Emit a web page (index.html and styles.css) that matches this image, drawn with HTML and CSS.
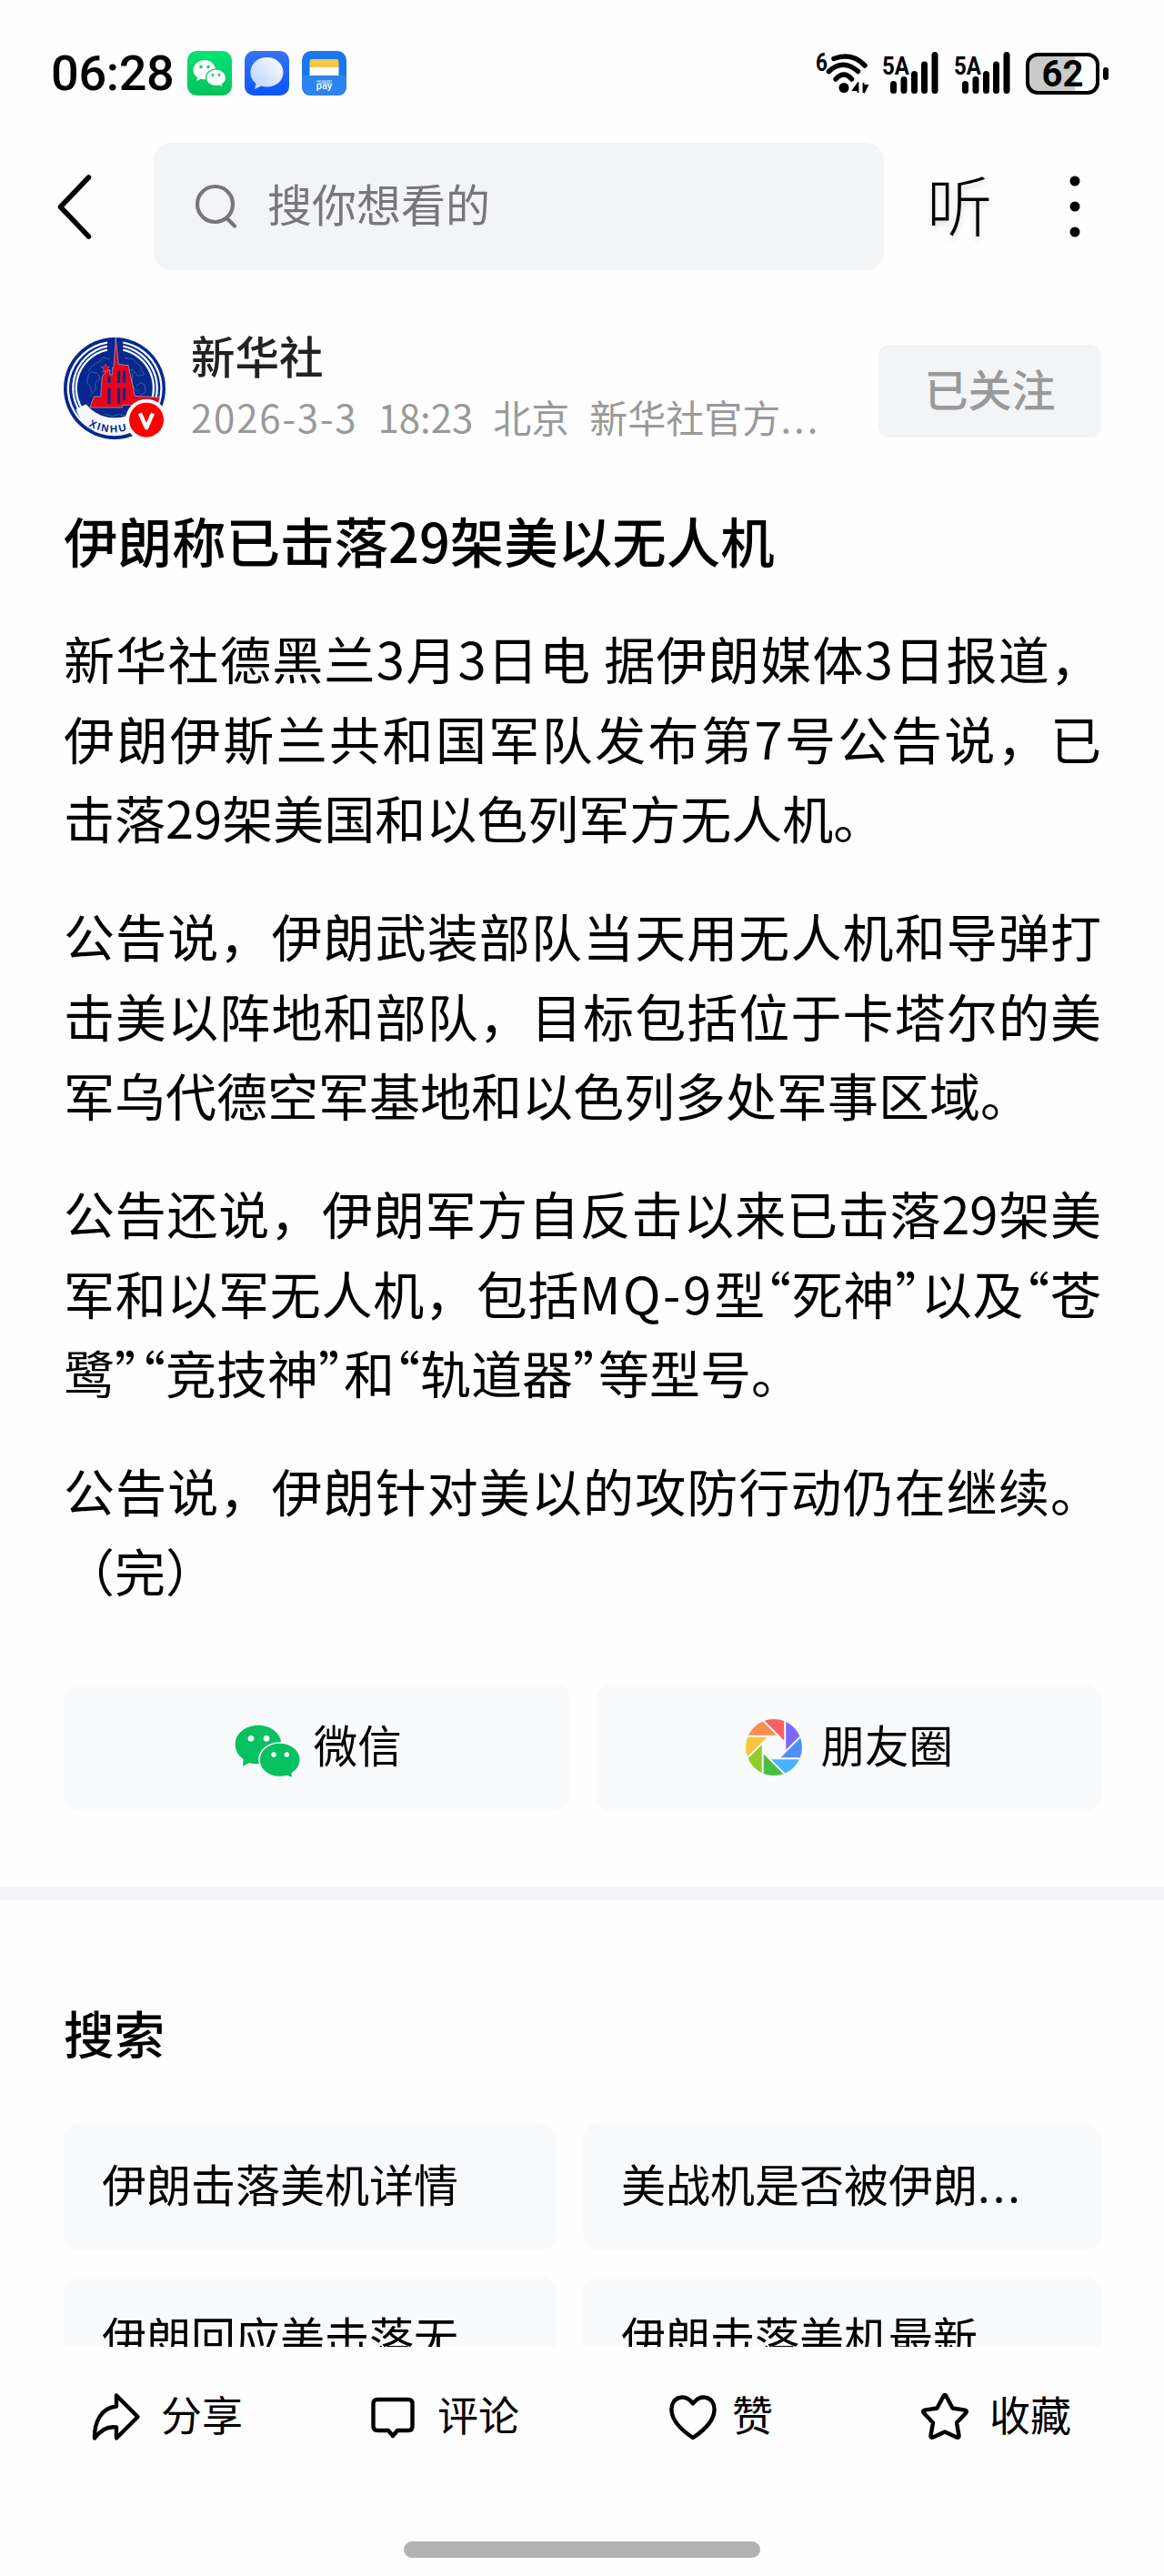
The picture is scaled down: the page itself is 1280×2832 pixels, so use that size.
FILE: index.html
```html
<!DOCTYPE html>
<html lang="zh-CN">
<head>
    <meta charset="UTF-8">
    <meta name="viewport" content="width=device-width, initial-scale=1.0">
    <title>伊朗称已击落29架美以无人机</title>
    <link rel="stylesheet" href="styles.css">
</head>
<body>
    <div class="scroll-area">
        <!-- Status bar -->
        <div class="status-bar">
            <div class="time">06:28</div>
            <div class="app-icons">
                <svg width="49" height="49" viewBox="0 0 49 49">
                    <defs>
                        <linearGradient id="green" x1="0" y1="0" x2="0" y2="1"><stop offset="0" stop-color="#04e474"/><stop offset="1" stop-color="#06c15c"/></linearGradient>
                    </defs>
                    <rect width="49" height="49" rx="10" fill="url(#green)"/>
                    <path d="M19 10c-7 0-12.500 5-12.500 11 0 3.500 1.800 6.500 4.800 8.500l-1 3.500 4.500-2.200c1.500.4 3 .5 4.500.5C26.500 31 31 26.500 31 21S26 10 19 10z" fill="#fff"/>
                    <path d="M31.500 20c-6 0-11 4.200-11 9.500s5 9.200 11 9.200c1.300 0 2.600-.2 3.700-.5l4 2-1-3.400c2.700-1.800 4.300-4.300 4.300-7.300 0-5.300-5-9.500-11-9.500z" fill="#fff" stroke="#06cf65" stroke-width="1.200"/>
                    <g fill="#06cf65"><circle cx="15" cy="17.500" r="1.800"/><circle cx="23" cy="17.500" r="1.800"/><circle cx="28" cy="26.500" r="1.500"/><circle cx="35" cy="26.500" r="1.500"/></g>
                </svg>
                <svg width="49" height="49" viewBox="0 0 49 49">
                    <defs>
                        <linearGradient id="blue" x1="0" y1="0" x2="0" y2="1"><stop offset="0" stop-color="#3674f4"/><stop offset="1" stop-color="#0a55fb"/></linearGradient>
                        <linearGradient id="bubble" x1="1" y1="0" x2="0" y2="1"><stop offset="0" stop-color="#fff"/><stop offset="1" stop-color="#b9cffb"/></linearGradient>
                    </defs>
                    <rect width="49" height="49" rx="10" fill="url(#blue)"/>
                    <path d="M24.500 7C14 7 6.500 14.500 6.500 23.500c0 5.500 2.500 9.500 6 12.300L11 42l7.500-3.500c2 .7 4 1 6 1 10.500 0 18-7 18-16S35 7 24.500 7z" fill="url(#bubble)"/>
                </svg>
                <svg width="49" height="49" viewBox="0 0 49 49">
                    <rect width="49" height="49" rx="10" fill="#1976ed"/>
                    <path d="M8.500 18v-6q0-3 3-3h26q3 0 3 3v6z" fill="#f5c748"/>
                    <path d="M8.500 18h32v9h-32z" fill="#fff"/>
                    <path d="M0 27h49v12q0 10-10 10H10Q0 49 0 39z" fill="#2d83ee"/>
                    <text x="24.500" y="36" class="pay-small">HUAWEI</text>
                    <text x="24.500" y="42" class="pay-text">pay</text>
                </svg>
            </div>
            <div class="signals">
                <svg class="wifi" width="60" height="50" viewBox="0 0 60 50">
                    <text x="0" y="22" class="net-text" textLength="13" lengthAdjust="spacingAndGlyphs">6</text>
                    <g fill="none" stroke="#000" stroke-width="5.500" stroke-linecap="round">
                        <path d="M20 8.500Q40 1 54 16"/>
                        <path d="M14.500 22.500Q30 8 46.500 22.500"/>
                        <path d="M22 31Q31 21 39.500 31"/>
                    </g>
                    <circle cx="31" cy="40.500" r="5.500"/>
                    <path d="M46.500 35v11M46 36l-5 7h5z M52.500 46V35M53 46l4-8h-4z" stroke="#000" stroke-width="1.800"/>
                </svg>
                <svg class="cell" width="63" height="50" viewBox="0 0 63 50">
                    <text x="0" y="25.500" class="net-text" textLength="30" lengthAdjust="spacingAndGlyphs">5A</text>
                    <path d="M12.500 36.500v7M24 31.500v12M35.500 25.500v18M46.500 15v28.500M58 4.500v39" stroke="#000" stroke-width="7" stroke-linecap="round"/>
                </svg>
                <svg class="cell" width="63" height="50" viewBox="0 0 63 50">
                    <text x="0" y="25.500" class="net-text" textLength="30" lengthAdjust="spacingAndGlyphs">5A</text>
                    <path d="M12.500 36.500v7M24 31.500v12M35.500 25.500v18M46.500 15v28.500M58 4.500v39" stroke="#000" stroke-width="7" stroke-linecap="round"/>
                </svg>
                <div class="battery">62</div>
                <div class="battery-cap"></div>
            </div>
        </div>

        <!-- Search header -->
        <div class="header">
            <svg class="back" width="40" height="74" viewBox="0 0 40 74">
                <path d="M36.500 5L5.500 37.500 36.500 70" fill="none" stroke="#000" stroke-width="5.500" stroke-linecap="round" stroke-linejoin="round"/>
            </svg>
            <div class="search-box">
                <svg width="46" height="50" viewBox="0 0 46 50">
                    <g fill="none" stroke="#777779" stroke-width="4.200" stroke-linecap="round"><circle cx="21.500" cy="22.500" r="19.500"/><path d="M35 38.500l8 8"/></g>
                </svg>
                <span>搜你想看的</span>
            </div>
            <div class="listen">听</div>
            <svg class="more" width="12" height="70" viewBox="0 0 12 70">
                <circle cx="6" cy="7" r="5.500"/><circle cx="6" cy="35" r="5.500"/><circle cx="6" cy="63" r="5.500"/>
            </svg>
        </div>

        <!-- Author -->
        <div class="author">
            <svg class="avatar" width="112" height="112" viewBox="30 33 336 336">
                <circle cx="198" cy="201" r="168" fill="#06278c"/>
                <path d="M70 270q30 85 128 88 90-3 128-88l-40-20H110z" fill="#f4f7ff"/>
                <g fill="none" stroke="#f4f7ff" stroke-width="7">
                    <path d="M174 50A153 153 0 0 0 112 328M226 50A153 153 0 0 1 322 292"/>
                    <path d="M174 62A141 141 0 0 0 116 312M226 62A141 141 0 0 1 316 276"/>
                    <path d="M174 74A129 129 0 0 0 116 298M226 74A129 129 0 0 1 306 270"/>
                </g>
                <ellipse cx="198" cy="192" rx="115" ry="106" fill="#06278c"/>
                <g fill="none" stroke="#5a78bd" stroke-width="2">
                    <path d="M112 144q12-24 35-30l12-15 24 5M120 146l22 5 8 18-16 16 2 20-12 12-8-24-9-12 5-26zM232 100l25 4 25 22 14 30-22 4-14-18-26-6M270 192l14-10 14 8 2 24-18 8M258 150q-8 40 12 60M165 285l25 8 20-6 30 5"/>
                </g>
                <path d="M202 34l9 88h14v2h18l22 102 82 4-6 26H224v8h-36v-0h-72l14-36h22l5-66 10-14-2-8h18v16h8v-24h4z" fill="#e4041b" stroke="#a8b5dc" stroke-width="2"/>
                <path d="M168 120l4 9 10 1-8 7 3 11-9-6-10 6 4-11-9-7 11-1z" fill="#e4041b" stroke="#a8b5dc"/>
                <path d="M180 161v22M180 200v52M212 143v40M212 200v52M230 143v40M230 200v40" stroke="#06278c" stroke-width="9"/>
                <defs><path id="ring" d="M112 324Q190 368 280 324"/></defs>
                <text class="logo-text"><textPath href="#ring">XINHUA</textPath></text>
                <circle cx="303" cy="305" r="69" fill="#fff"/>
                <circle cx="303" cy="305" r="57" fill="#f00"/>
                <path d="M282 283l21 48 21-48" fill="none" stroke="#fff" stroke-width="13" stroke-linejoin="round"/>
            </svg>
            <div class="author-info">
                <div class="author-name">新华社</div>
                <div class="author-meta"><span class="date">2026-3-3</span><span>18:23</span><span>北京</span><span>新华社官方<span class="dots">...</span></span></div>
            </div>
            <div class="follow">已关注</div>
        </div>

        <!-- Article -->
        <h1 class="title">伊朗称已击落29架美以无人机</h1>
        <div class="article">
            <p>
                <span class="line full">新华社德黑兰3月3日电 据伊朗媒体3日报道，</span>
                <span class="line full">伊朗伊斯兰共和国军队发布第7号公告说，已</span>
                <span class="line">击落29架美国和以色列军方无人机。</span>
            </p>
            <p>
                <span class="line full">公告说，伊朗武装部队当天用无人机和导弹打</span>
                <span class="line full">击美以阵地和部队，目标包括位于卡塔尔的美</span>
                <span class="line">军乌代德空军基地和以色列多处军事区域。</span>
            </p>
            <p>
                <span class="line full">公告还说，伊朗军方自反击以来已击落29架美</span>
                <span class="line full">军和以军无人机，包括<span class="latin">MQ-9</span>型<span class="quote">“</span>死神<span class="quote">”</span>以及<span class="quote">“</span>苍</span>
                <span class="line">鹭<span class="quote">”“</span>竞技神<span class="quote">”</span>和<span class="quote">“</span>轨道器<span class="quote">”</span>等型号。</span>
            </p>
            <p>
                <span class="line full">公告说，伊朗针对美以的攻防行动仍在继续。</span>
                <span class="line">（完）</span>
            </p>
        </div>

        <!-- Share buttons -->
        <div class="share-row">
            <div class="share-btn">
                <svg class="wechat" width="72" height="60" viewBox="24 45 216 180">
                    <path d="M102 47C59 47 26 75 26 110c0 20 10 38 27 48l-2 24 22-11c9 3 18 4 29 4 42 0 76-29 76-65s-34-63-76-63z" fill="#07c160"/>
                    <path d="M173 105c-38 0-68 25-68 56s30 57 68 57c8 0 16-1 24-3l19 7-2-17c16-10 27-26 27-44 0-31-30-56-68-56z" fill="#07c160" stroke="#f9fafc" stroke-width="5"/>
                    <g fill="#fff"><circle cx="78" cy="91" r="10"/><circle cx="129" cy="91" r="10"/><circle cx="153" cy="144" r="8"/><circle cx="196" cy="144" r="8"/></g>
                </svg>
                <span>微信</span>
            </div>
            <div class="share-btn">
                <svg class="moments" width="62" height="62" viewBox="-31 -31 62 62">
                    <defs>
                        <clipPath id="disc"><circle r="31"/></clipPath>
                        <path id="blade" d="M-13.900-31.400L12.400-5.100V-36z"/>
                    </defs>
                    <g clip-path="url(#disc)" stroke="#f9fafc" stroke-width="1.800">
                        <use href="#blade" fill="#fa5f5f"/>
                        <use href="#blade" fill="#7a68fb" transform="rotate(45)"/>
                        <use href="#blade" fill="#508ffa" transform="rotate(90)"/>
                        <use href="#blade" fill="#48b3fd" transform="rotate(135)"/>
                        <use href="#blade" fill="#49be43" transform="rotate(180)"/>
                        <use href="#blade" fill="#8dce2b" transform="rotate(225)"/>
                        <use href="#blade" fill="#fec63d" transform="rotate(270)"/>
                        <use href="#blade" fill="#fc8e50" transform="rotate(315)"/>
                    </g>
                </svg>
                <span>朋友圈</span>
            </div>
        </div>

        <div class="divider"></div>

        <!-- Related searches -->
        <h2 class="section-title">搜索</h2>
        <div class="related">
            <div class="related-item">伊朗击落美机详情</div>
            <div class="related-item">美战机是否被伊朗<span class="dots">...</span></div>
            <div class="related-item">伊朗回应美击落无</div>
            <div class="related-item">伊朗击落美机最新</div>
        </div>
    </div>

    <!-- Bottom toolbar -->
    <div class="toolbar">
        <div class="actions">
            <div class="action share">
                <svg width="53" height="54" viewBox="0 0 53 54">
                    <path d="M27 3.500L50.500 27 27 50.500V38.500C17 37 10 41 3 50.500 2.500 32 11 17 27 15.500z"/>
                </svg>
                <span>分享</span>
            </div>
            <div class="action comment">
                <svg width="50" height="54" viewBox="0 0 50 54">
                    <path d="M8 8h34q4.500 0 4.500 4.500v25q0 4.500-4.500 4.500H30l-5 6-5-6H8q-4.500 0-4.500-4.500v-25Q3.500 8 8 8z"/>
                </svg>
                <span>评论</span>
            </div>
            <div class="action like">
                <svg width="52" height="54" viewBox="0 0 52 54">
                    <path d="M26 12.500C30 7 35 5 39.500 5.700 46 6.500 50 12 49.500 20 49 31 38 42 26 50 14 42 3 31 2.500 20 2 12 6 6.500 12.500 5.700 17 5 22 7 26 12.500z"/>
                </svg>
                <span>赞</span>
            </div>
            <div class="action favorite">
                <svg width="52" height="54" viewBox="0 0 52 54">
                    <path d="M24.500 4.200q1.500-2.400 3 0l7 13.300 13.500 2.200q3 .8 1.200 3L39 33.500l2.500 14q.2 3-2.600 2L26 43.500l-12.900 6q-2.800 1-2.600-2l2.500-14L2.800 22.700q-1.800-2.200 1.200-3l13.500-2.200z"/>
                </svg>
                <span>收藏</span>
            </div>
        </div>
        <div class="home-indicator"></div>
    </div>
</body>
</html>
```
FILE: styles.css
```css
* {
    margin: 0;
    padding: 0;
    box-sizing: border-box;
}
body {
    width: 1280px;
    height: 2832px;
    display: flex;
    flex-direction: column;
    overflow: hidden;
    background: #fefefe;
    color: #000;
    font-family: "Noto Sans CJK SC", sans-serif;
}
svg {
    display: block;
    flex-shrink: 0;
    overflow: visible;
}
.scroll-area {
    height: 2580px;
    flex-shrink: 0;
    overflow: hidden;
}
/* Status bar */
.status-bar {
    height: 157px;
    padding: 4px 61px 0 56px;
    display: flex;
    align-items: center;
}
.time {
    width: 150px;
    font: 500 54px/60px Roboto, sans-serif;
    letter-spacing: -0.3px;
}
.app-icons {
    display: flex;
    gap: 14px;
}
.pay-small, .pay-text {
    fill: #fff;
    font-family: Roboto, sans-serif;
    text-anchor: middle;
}
.pay-small {
    font-size: 4.5px;
}
.pay-text {
    font-size: 11px;
    font-weight: 500;
}
.signals {
    margin-left: auto;
    display: flex;
    align-items: center;
}
.net-text {
    font: 700 28px Roboto, sans-serif;
}
.wifi {
    margin-right: 13px;
}
.cell {
    margin-right: 16px;
}
.battery {
    width: 81px;
    height: 46px;
    border: 4px solid #000;
    border-radius: 13px;
    background: linear-gradient(to right, #cacaca 69%, #fff 69%);
    font: 700 40px/39px Roboto, sans-serif;
    text-align: center;
}
.battery-cap {
    width: 6px;
    height: 14px;
    margin-left: 4px;
    border-radius: 3px;
    background: #000;
}
/* Search header */
.header {
    height: 140px;
    padding: 0 92px 0 61px;
    display: flex;
    align-items: center;
}
.search-box {
    width: 803px;
    height: 140px;
    margin-left: 68px;
    padding-left: 46px;
    display: flex;
    align-items: center;
    border-radius: 20px;
    background: #f3f4f6;
    color: #777779;
    font-size: 49px;
    line-height: 60px;
}
.search-box span {
    margin: -8px 0 0 33px;
}
.listen {
    margin: -9px 0 0 47px;
    font-size: 72px;
    line-height: 80px;
    font-weight: 300;
    text-shadow: 0 4px 6px rgba(0, 0, 0, 0.15);
}
.more {
    margin-left: auto;
    margin-top: -1px;
}
/* Author */
.author {
    height: 112px;
    margin: 74px 69px 0 70px;
    display: flex;
}
.logo-text {
    fill: #06278c;
    font: 700 34px "Liberation Sans", sans-serif;
    letter-spacing: 6px;
}
.author-info {
    margin: -5px 0 0 28px;
}
.author-name {
    color: #222;
    font-size: 48.5px;
    line-height: 48px;
    font-weight: 500;
}
.author-meta {
    margin-top: 20px;
    display: flex;
    gap: 22px;
    color: #999;
    font-size: 42px;
    line-height: 48px;
    white-space: nowrap;
}
.date {
    letter-spacing: 1.8px;
}
.dots {
    letter-spacing: 3px;
}
.follow {
    width: 245px;
    height: 102px;
    margin: 8px 0 0 auto;
    border-radius: 12px;
    background: #f3f4f6;
    color: #999;
    font-size: 48px;
    line-height: 95px;
    font-weight: 500;
    text-align: center;
}
/* Article */
.title {
    margin: 70px 70px 0;
    font-size: 59.5px;
    line-height: 80px;
    font-weight: 500;
}
.article {
    margin: 46px 69px 0 70px;
    font-size: 56px;
    line-height: 87.5px;
}
.article p {
    margin-bottom: 42.5px;
}
.line {
    display: block;
    white-space: nowrap;
}
.full {
    text-align: justify;
    text-align-last: justify;
}
.latin {
    letter-spacing: 2.5px;
}
.quote {
    font-feature-settings: "halt";
}
/* Share buttons */
.share-row {
    margin: 82px 69px 0 70px;
    display: grid;
    grid-template-columns: 1fr 1fr;
    gap: 28px;
}
.share-btn {
    height: 140px;
    padding-left: 3px;
    display: flex;
    align-items: center;
    justify-content: center;
    border-radius: 18px;
    background: #f9fafc;
    font-size: 48.5px;
    line-height: 60px;
}
.share-btn span {
    margin-top: -9px;
}
.wechat {
    margin: 9px 15px 0 0;
}
.moments {
    margin-right: 20px;
}
.divider {
    height: 14px;
    margin-top: 84px;
    background: #f3f4f6;
}
/* Related searches */
.section-title {
    margin: 115px 70px 70px;
    font-size: 55.5px;
    line-height: 60px;
    font-weight: 500;
}
.related {
    margin: 0 69px 0 70px;
    display: grid;
    grid-template-columns: 542px 570px;
    gap: 28px 29px;
}
.related-item {
    height: 140px;
    padding-left: 42px;
    border-radius: 18px;
    background: #f9fafc;
    font-size: 49px;
    line-height: 132px;
    white-space: nowrap;
}
/* Bottom toolbar */
.toolbar {
    height: 252px;
    flex-shrink: 0;
}
.actions {
    height: 153px;
    padding-left: 101px;
    display: flex;
    align-items: center;
}
.action {
    display: flex;
    align-items: center;
    font-size: 45px;
    line-height: 54px;
}
.action svg {
    fill: none;
    stroke: #000;
    stroke-width: 4.4;
    stroke-linejoin: round;
}
.action span {
    margin: -5px 0 0 23px;
}
.comment {
    margin-left: 140px;
}
.comment span {
    margin-left: 24px;
}
.like {
    margin-left: 165px;
}
.like span {
    margin-left: 17px;
}
.favorite {
    margin-left: 163px;
}
.home-indicator {
    width: 392px;
    height: 18px;
    margin: 61px auto 0;
    border-radius: 9px;
    background: #b2b2b2;
}
```
